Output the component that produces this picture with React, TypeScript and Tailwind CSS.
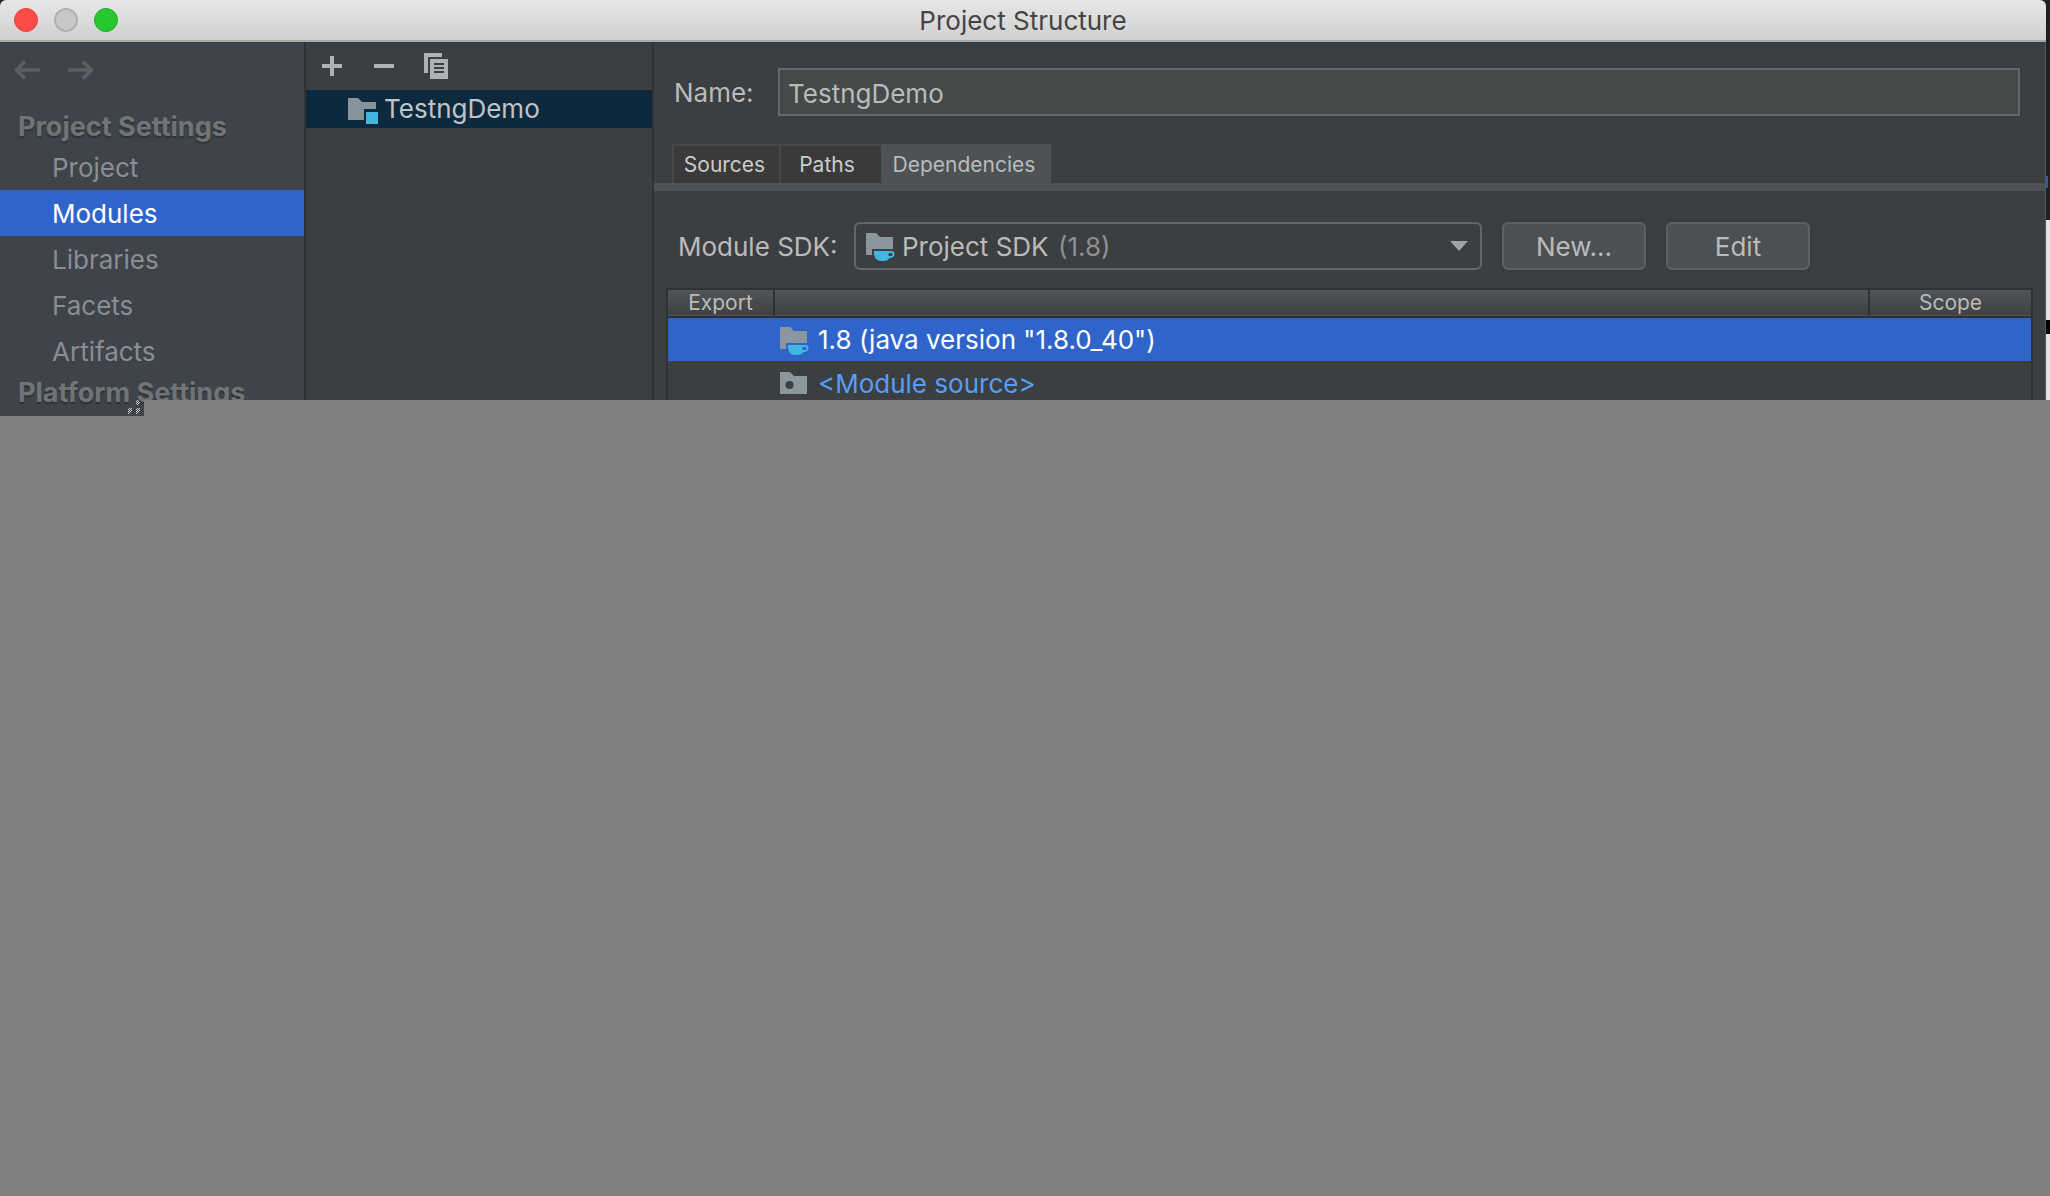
import clsx from "clsx";
import React from "react";

const settings = ["Project", "Modules", "Libraries", "Facets", "Artifacts"];

function FolderIcon({ badge }: { badge: "module" | "sdk" | "source" }): React.JSX.Element {
  return (
    <svg width="32" height="32" viewBox="0 0 32 32" className="shrink-0" aria-hidden="true">
      {badge === "module" && (
        <>
          <path d="M2 5h10l4 4h14v7H18v11H2z" fill="#87939a" />
          <path d="M20 19h12v12H20z" fill="#40b6e0" />
        </>
      )}
      {badge === "sdk" && (
        <>
          <path d="M2 3h10l4 4h13v12H8v6H2z" fill="#8b979f" />
          <path
            fillRule="evenodd"
            d="M10 21h17c2.500 0 3.500 1 3.500 3s-1.500 4-5 4c-1.500 2-3 3-5.500 3h-3c-4 0-7-3.500-7-7.500zM24.500 23v3h2c1.500 0 2-.500 2-1.500s-.500-1.500-1.500-1.500z"
            fill="#40b6e0"
          />
        </>
      )}
      {badge === "source" && (
        <path
          fillRule="evenodd"
          d="M2 4h10l4 4h13v18H2zM11.500 13a4 4 0 1 0 0 8a4 4 0 0 0 0-8z"
          fill="#8b979b"
        />
      )}
    </svg>
  );
}

function TitleBar(): React.JSX.Element {
  return (
    <header className="relative flex h-[42px] items-center justify-center rounded-t-md border-b-2 border-[#a9a9a9] bg-linear-to-b from-[#e7e7e7] to-[#d0d0d0]">
      <div className="absolute left-3.5 flex gap-4">
        <button aria-label="Close" className="size-6 rounded-full border border-[#e2443f] bg-[#fc4b48]" />
        <button aria-label="Minimize" className="size-6 rounded-full border-2 border-[#b0b0b0] bg-[#c8c8c8]" />
        <button aria-label="Zoom" className="size-6 rounded-full border border-[#1fa82a] bg-[#27c730]" />
      </div>
      <h1 className="pt-0.5 text-[#444444]">Project Structure</h1>
    </header>
  );
}

function Sidebar(): React.JSX.Element {
  return (
    <nav className="h-[374px] w-[306px] shrink-0 overflow-hidden border-r-2 border-[#303234] bg-[#3f434a]">
      <div className="flex h-[66px] gap-7 px-3.5 pt-[15px] text-[#5d6062]">
        <button aria-label="Back" className="size-[26px]">
          <svg width="26" height="20" viewBox="0 0 26 20" fill="none" stroke="currentColor" strokeWidth="3.500">
            <path d="M26 10H3M11 1.500L2.500 10l8.500 8.500" />
          </svg>
        </button>
        <button aria-label="Forward" className="size-[26px]">
          <svg width="26" height="20" viewBox="0 0 26 20" fill="none" stroke="currentColor" strokeWidth="3.500">
            <path d="M0 10h23M15 1.500l8.500 8.500l-8.500 8.500" />
          </svg>
        </button>
      </div>
      <h2 className="h-9 pl-[18px] text-[27px] leading-[38px] font-bold text-[#717476] text-shadow-[0_2px_1px_#303338]">
        Project Settings
      </h2>
      <ul>
        {settings.map((item) => (
          <li key={item}>
            <button
              className={clsx(
                "h-[46px] w-full pt-0.5 pl-[52px] text-left",
                item === "Modules" ? "bg-[#2f65ca] text-white" : "text-[#8b8e92]"
              )}
            >
              {item}
            </button>
          </li>
        ))}
      </ul>
      <h2 className="pl-[18px] text-[27px] leading-[38px] font-bold text-[#717476] text-shadow-[0_2px_1px_#303338]">
        Platform Settings
      </h2>
    </nav>
  );
}

function ModuleList(): React.JSX.Element {
  return (
    <section className="w-[348px] shrink-0 border-r-2 border-[#303234]">
      <div className="flex h-12 items-center gap-5 px-2.5 text-[#afb1b3]">
        <button aria-label="Add" className="p-1.5">
          <svg width="20" height="20" viewBox="0 0 20 20" fill="currentColor">
            <path d="M8 0h4v8h8v4h-8v8H8v-8H0V8h8z" />
          </svg>
        </button>
        <button aria-label="Remove" className="p-1.5">
          <svg width="20" height="20" viewBox="0 0 20 20" fill="currentColor">
            <path d="M0 8h20v4H0z" />
          </svg>
        </button>
        <button aria-label="Copy" className="p-1">
          <svg width="24" height="26" viewBox="0 0 24 26" fill="currentColor">
            <path d="M0 0h18v4H4v16H0z" />
            <path fillRule="evenodd" d="M6 6h18v20H6zM10 10v2h10v-2zM10 14v2h10v-2zM10 18v2h10v-2z" />
          </svg>
        </button>
      </div>
      <button className="flex h-[38px] w-full items-center gap-1.5 bg-[#0d293e] pl-10 text-left text-[#c0c4c8]">
        <FolderIcon badge="module" />
        TestngDemo
      </button>
    </section>
  );
}

function Tabs(): React.JSX.Element {
  return (
    <div className="mt-7 border-b-8 border-[#4e5254] pl-[18px]">
      <div role="tablist" className="flex h-[39px] text-[21px]">
        <button role="tab" className="w-[107px] border-t-2 border-l-2 border-[#454849] bg-[#3a3a3a] pr-1 text-[#cccccc]">
          Sources
        </button>
        <button role="tab" className="w-[102px] border-t-2 border-l-2 border-[#454849] bg-[#3a3a3a] pr-2 text-[#cccccc]">
          Paths
        </button>
        <button role="tab" aria-selected="true" className="w-[170px] bg-[#4e5254] pt-0.5 pr-1 text-[#b8bbbd]">
          Dependencies
        </button>
      </div>
    </div>
  );
}

function DependencyTable(): React.JSX.Element {
  return (
    <div className="mt-[18px] mr-3 ml-3 border-2 border-b-0 border-[#303335]">
      <table className="w-full table-fixed border-collapse text-left">
        <thead className="text-[21px] text-[#bbbbbb]">
          <tr className="h-[26px] border-b-2 border-[#2b3036] bg-linear-to-b from-[#515557] to-[#3f4143]">
            <th className="w-[106px] border-r-2 border-[#2f3234] p-0 text-center leading-[26px] font-normal">Export</th>
            <th className="p-0" aria-label="Dependency" />
            <th className="w-[162px] border-l-2 border-[#2f3234] p-0 text-center leading-[26px] font-normal">Scope</th>
          </tr>
        </thead>
        <tbody>
          <tr className="h-11 bg-[#2f65ca] text-white">
            <td className="p-0" />
            <td className="p-0 pl-1">
              <div className="flex items-center gap-2">
                <FolderIcon badge="sdk" />
                1.8 (java version "1.8.0_40")
              </div>
            </td>
            <td className="p-0" />
          </tr>
          <tr className="h-[46px] text-[#589df6]">
            <td className="p-0" />
            <td className="p-0 pl-1">
              <div className="flex items-center gap-2">
                <FolderIcon badge="source" />
                &lt;Module source&gt;
              </div>
            </td>
            <td className="p-0" />
          </tr>
        </tbody>
      </table>
    </div>
  );
}

function ModuleEditor(): React.JSX.Element {
  return (
    <main className="min-w-0 grow border-r border-[#55585a]">
      <div className="flex items-center pt-[26px] pr-[25px] pl-5">
        <label htmlFor="module-name" className="w-[104px] pt-0.5">
          Name:
        </label>
        <input
          id="module-name"
          defaultValue="TestngDemo"
          className="h-12 min-w-0 grow border-2 border-[#646769] bg-[#45494a] px-2 pt-0.5 outline-none"
        />
      </div>
      <Tabs />
      <div className="mt-[31px] flex items-center gap-5 pl-6">
        <div className="flex items-center">
          <label htmlFor="module-sdk" className="w-44 pt-0.5">
            Module SDK:
          </label>
          <div className="relative">
            <select
              id="module-sdk"
              className="h-12 w-[628px] appearance-none rounded-md border-2 border-[#646769] bg-[#3c3f41] pt-0.5 pr-10 pl-[46px] outline-none"
            >
              <option>Project SDK</option>
            </select>
            <div className="pointer-events-none absolute inset-0 flex items-center pr-3.5 pl-2.5">
              <FolderIcon badge="sdk" />
              <span className="ml-[162px] grow pt-0.5 text-[#8f8f8f]">(1.8)</span>
              <svg width="18" height="10" viewBox="0 0 18 10" fill="#a0a3a5" aria-hidden="true">
                <path d="M0 0h18l-9 10z" />
              </svg>
            </div>
          </div>
        </div>
        <button className="h-12 w-36 rounded-md border-2 border-[#5e6162] bg-[#4c5052] pt-0.5 shadow-sm">New...</button>
        <button className="h-12 w-36 rounded-md border-2 border-[#5e6162] bg-[#4c5052] pt-0.5 shadow-sm">Edit</button>
      </div>
      <DependencyTable />
    </main>
  );
}

export default function App(): React.JSX.Element {
  return (
    <div className="min-h-screen bg-[#808080] font-[Inter,sans-serif] text-[26px] leading-8 text-[#bbbbbb]">
      <div className="relative flex overflow-hidden bg-[#1e2124]">
        <div className="min-w-0 grow">
          <TitleBar />
          <div className="flex bg-[#3c3f41]">
            <Sidebar />
            <ModuleList />
            <ModuleEditor />
          </div>
        </div>
        {/* windows behind the dialog */}
        <div className="w-1 shrink-0 pt-44">
          <div className="h-3 w-0.5 bg-[#2a5ea8]" />
          <div className="mt-8 h-[100px] bg-[#e4e2e5]" />
          <div className="h-3.5 bg-black" />
          <div className="h-20 bg-[#e4e2e5]" />
        </div>
        <div className="absolute right-0 bottom-0 left-36 h-4 bg-[#808080]" />
        {/* resize grip */}
        <svg width="16" height="16" viewBox="0 0 16 16" className="absolute bottom-0 left-32" aria-hidden="true">
          <path
            d="M9 .5h1M8 1.500h1M10 1.500h1M9 2.500h1M11 2.500h1M8 3.500h1M10 3.500h1M9 4.500h1M1 8.500h1M3 8.500h1M0 9.500h1M2 9.500h1M1 10.500h1M3 10.500h1M0 11.500h1M2 11.500h1M1 12.500h1M0 13.500h1M9 8.500h1M11 8.500h1M8 9.500h1M10 9.500h1M9 10.500h1M11 10.500h1M8 11.500h1M10 11.500h1M9 12.500h1M8 13.500h1"
            stroke="#d0d2d5"
            strokeWidth="1"
          />
        </svg>
      </div>
    </div>
  );
}
